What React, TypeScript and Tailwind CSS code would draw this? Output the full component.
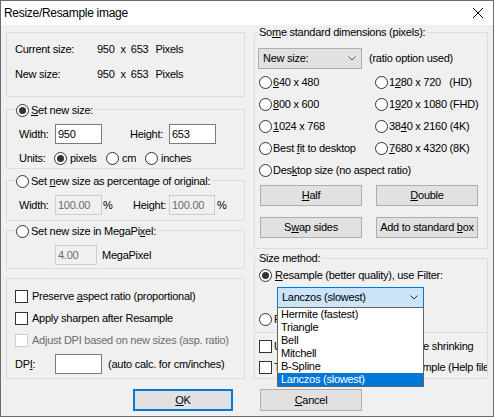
import React from 'react';

type Kids = { children?: React.ReactNode };

function Radio({ checked = false }: { checked?: boolean }) {
  return (
    <span className="flex h-[13px] w-[13px] shrink-0 items-center justify-center rounded-full border border-[#333333] bg-white">
      {checked && <span className="h-[7px] w-[7px] rounded-full bg-[#333333]" />}
    </span>
  );
}

function Check({ disabled = false }: { disabled?: boolean }) {
  return disabled ? (
    <span className="h-[13px] w-[13px] shrink-0 border border-[#cccccc] bg-white" />
  ) : (
    <span className="h-[13px] w-[13px] shrink-0 border border-[#333333] bg-white" />
  );
}

function Field({ value = '', width, disabled = false }: { value?: string; width: string; disabled?: boolean }) {
  return disabled ? (
    <span className={`flex h-[20px] shrink-0 items-center border border-[#cccccc] bg-[#f0f0f0] pl-[2px] text-[#6d6d6d] ${width}`}>{value}</span>
  ) : (
    <span className={`flex h-[20px] shrink-0 items-center border border-[#7a7a7a] bg-white pl-[2px] ${width}`}>{value}</span>
  );
}

function Button({ children, className = '' }: Kids & { className?: string }) {
  return (
    <div className={`flex h-[21px] w-[102px] items-center justify-center border border-[#adadad] bg-[#e1e1e1] ${className}`}>
      {children}
    </div>
  );
}

function Chevron({ color }: { color: string }) {
  return (
    <svg width="8" height="5" viewBox="0 0 8 5" fill="none">
      <polyline points="0.5,0.5 4,4 7.5,0.5" stroke={color} strokeWidth="1" />
    </svg>
  );
}

function Group({ header, radioHeader = false, left, className = '', children }: Kids & { header?: React.ReactNode; radioHeader?: boolean; left: string; className?: string }) {
  return (
    <div className={`relative border border-[#dcdcdc] ${className}`}>
      {header && (
        <div className={`absolute flex h-[13px] items-center bg-[#f0f0f0] pr-[2px] ${radioHeader ? '-top-[6px]' : '-top-[7px]'} ${left}`}>
          {header}
        </div>
      )}
      {children}
    </div>
  );
}

function RadioLabel({ checked = false, children, gap = 'ml-[2px]' }: Kids & { checked?: boolean; gap?: string }) {
  return (
    <div className="flex h-[13px] items-center whitespace-nowrap">
      <Radio checked={checked} />
      <span className={gap}>{children}</span>
    </div>
  );
}

function SizeRow({ label, className = '' }: { label: string; className?: string }) {
  return (
    <div className={`flex h-[13px] items-center whitespace-nowrap ${className}`}>
      <span className="w-[82px]">{label}</span>
      <span>950</span>
      <span className="ml-[6px]">x</span>
      <span className="ml-[5px]">653</span>
      <span className="ml-[7px]">Pixels</span>
    </div>
  );
}

export default function App() {
  return (
    <div className="h-[417px] w-[494px] overflow-hidden border border-[#6b6b6b] bg-[#f0f0f0] font-['Liberation_Sans',Arial,sans-serif] text-[11px] leading-[13px] tracking-[-0.25px] text-black">
      {/* title bar */}
      <div className="flex h-[24px] items-center justify-between bg-white pl-[3px] pr-[10px]">
        <span className="text-[12px] tracking-[-0.3px]">Resize/Resample image</span>
        <svg width="10" height="10" viewBox="0 0 10 10">
          <line x1="0" y1="0" x2="10" y2="10" stroke="#000" strokeWidth="1" />
          <line x1="10" y1="0" x2="0" y2="10" stroke="#000" strokeWidth="1" />
        </svg>
      </div>

      <div className="flex pl-[5px]">
        {/* left column */}
        <div className="w-[239px]">
          <Group left="left-[8px]" className="mt-[7px] h-[65px] pl-[8px] pt-[10px]">
            <SizeRow label="Current size:" />
            <SizeRow label="New size:" className="mt-[12px]" />
          </Group>

          <Group
            radioHeader
            left="left-[9px]"
            header={<RadioLabel checked><u>S</u>et new size:</RadioLabel>}
            className="mt-[12px] h-[60px] pl-[12px] pt-[14px]"
          >
            <div className="flex h-[20px] items-center">
              <span className="w-[36px]">Width:</span>
              <Field value="950" width="w-[47px]" />
              <span className="ml-[28px] w-[39px]">Height:</span>
              <Field value="653" width="w-[47px]" />
            </div>
            <div className="mt-[8px] flex h-[13px] items-center">
              <span className="w-[35px]">Units:</span>
              <div className="w-[52px]"><RadioLabel checked gap="ml-[3px]">pixels</RadioLabel></div>
              <div className="w-[39px]"><RadioLabel gap="ml-[3px]">cm</RadioLabel></div>
              <RadioLabel gap="ml-[3px]">inches</RadioLabel>
            </div>
          </Group>

          <Group
            radioHeader
            left="left-[9px]"
            header={<RadioLabel>Set <u>n</u>ew size as percentage of original:</RadioLabel>}
            className="mt-[11px] h-[41px] pl-[12px] pt-[14px]"
          >
            <div className="flex h-[20px] items-center">
              <span className="w-[36px]">Width:</span>
              <Field value="100.00" width="w-[47px]" disabled />
              <span className="ml-[1px] w-[30px]">%</span>
              <span className="w-[36px]">Height:</span>
              <Field value="100.00" width="w-[46px]" disabled />
              <span className="ml-[2px]">%</span>
            </div>
          </Group>

          <Group
            radioHeader
            left="left-[9px]"
            header={<RadioLabel>Set new size in MegaPi<u>x</u>el:</RadioLabel>}
            className="mt-[9px] h-[39px] pl-[48px] pt-[14px]"
          >
            <div className="flex h-[20px] items-center">
              <Field value="4.00" width="w-[42px]" disabled />
              <span className="ml-[5px]">MegaPixel</span>
            </div>
          </Group>

          <Group left="left-[8px]" className="mt-[9px] h-[101px] pl-[8px] pt-[11px]">
            <div className="flex h-[13px] items-center whitespace-nowrap">
              <Check />
              <span className="ml-[4px]">Preserve <u>a</u>spect ratio (proportional)</span>
            </div>
            <div className="mt-[9px] flex h-[13px] items-center whitespace-nowrap">
              <Check />
              <span className="ml-[4px]">Apply sharpen after Resample</span>
            </div>
            <div className="mt-[9px] flex h-[13px] items-center whitespace-nowrap text-[#6d6d6d]">
              <Check disabled />
              <span className="ml-[4px]">Adjust DPI based on new sizes (asp. ratio)</span>
            </div>
            <div className="mt-[7px] flex h-[20px] items-center whitespace-nowrap">
              <span className="w-[40px]">DP<u>I</u>:</span>
              <Field width="w-[47px]" />
              <span className="ml-[6px]">(auto calc. for cm/inches)</span>
            </div>
          </Group>

          <div className="ml-[127px] mt-[10px] flex h-[22px] w-[100px] items-center justify-center border-2 border-[#0078d7] bg-[#e1e1e1]">
            <span><u>O</u>K</span>
          </div>
        </div>

        {/* right column */}
        <div className="ml-[9px] w-[234px]">
          <Group
            left="left-[3px]"
            header={<span className="pl-[1px]">So<u>m</u>e standard dimensions (pixels):</span>}
            className="mt-[7px] h-[217px] pl-[3px] pt-[15px]"
          >
            <div className="flex h-[21px] items-center whitespace-nowrap">
              <div className="flex h-[21px] w-[104px] items-center justify-between border border-[#adadad] bg-[#e1e1e1] pl-[4px] pr-[5px]">
                <span>New size:</span>
                <Chevron color="#606060" />
              </div>
              <span className="ml-[7px]">(ratio option used)</span>
            </div>

            <div className="mt-[7px] grid grid-cols-[116px_1fr] gap-y-[9px] pl-[1px]">
              <RadioLabel gap="ml-[1px]"><u>6</u>40 x 480</RadioLabel>
              <RadioLabel gap="ml-[1px]">1<u>2</u>80 x 720&nbsp;&nbsp;&nbsp;(HD)</RadioLabel>
              <RadioLabel gap="ml-[1px]"><u>8</u>00 x 600</RadioLabel>
              <RadioLabel gap="ml-[1px]">1<u>9</u>20 x 1080 (FHD)</RadioLabel>
              <RadioLabel gap="ml-[1px]"><u>1</u>024 x 768</RadioLabel>
              <RadioLabel gap="ml-[1px]">38<u>4</u>0 x 2160 (4K)</RadioLabel>
              <RadioLabel gap="ml-[1px]">Best <u>f</u>it to desktop</RadioLabel>
              <RadioLabel gap="ml-[1px]"><u>7</u>680 x 4320 (8K)</RadioLabel>
              <div className="col-span-2">
                <RadioLabel gap="ml-[1px]">Des<u>k</u>top size (no aspect ratio)</RadioLabel>
              </div>
            </div>

            <div className="mt-[8px] flex gap-[14px] pl-[2px]">
              <Button><span><u>H</u>alf</span></Button>
              <Button><span><u>D</u>ouble</span></Button>
            </div>
            <div className="mt-[11px] flex gap-[14px] pl-[2px]">
              <Button><span>S<u>w</u>ap sides</span></Button>
              <Button><span>Add to standard <u>b</u>ox</span></Button>
            </div>
          </Group>

          <Group
            left="left-[3px]"
            header={<span className="pl-[1px]">Size method:</span>}
            className="mt-[9px] h-[75px] pl-[4px] pt-[10px]"
          >
            <RadioLabel checked gap="ml-[3px]"><u>R</u>esample (better quality), use Filter:</RadioLabel>

            <div className="relative ml-[18px] mt-[5px] h-[21px] w-[147px]">
              <div className="flex h-[21px] items-center justify-between border border-[#0078d7] bg-[#cce4f7] pl-[4px] pr-[5px]">
                <span>Lanczos (slowest)</span>
                <Chevron color="#333333" />
              </div>
              <div className="absolute left-0 top-[20px] z-10 h-[80px] w-[147px] border border-[#646464] bg-white">
                {['Hermite (fastest)', 'Triangle', 'Bell', 'Mitchell', 'B-Spline'].map((f) => (
                  <div key={f} className="h-[13px] whitespace-nowrap pl-[3px]">{f}</div>
                ))}
                <div className="h-[13px] whitespace-nowrap bg-[#0078d7] pl-[3px] text-white">Lanczos (slowest)</div>
              </div>
            </div>

            <div className="mt-[5px]">
              <RadioLabel gap="ml-[2px]">Resize (faster, worse quality)</RadioLabel>
            </div>
          </Group>

          <div className="h-[46px] overflow-hidden border-x border-b border-[#dcdcdc] pl-[4px] pt-[7px]">
            <div className="flex h-[13px] items-center whitespace-nowrap">
              <Check />
              <span className="ml-[2px]">Use Resample function for image shrinking</span>
            </div>
            <div className="mt-[8px] flex h-[13px] items-center whitespace-nowrap">
              <Check />
              <span className="ml-[2px]">Try to use fast (multi-core) Resample (Help file)</span>
            </div>
          </div>

          <Button className="ml-[6px] mt-[10px] h-[22px]">
            <span><u>C</u>ancel</span>
          </Button>
        </div>
      </div>
    </div>
  );
}
